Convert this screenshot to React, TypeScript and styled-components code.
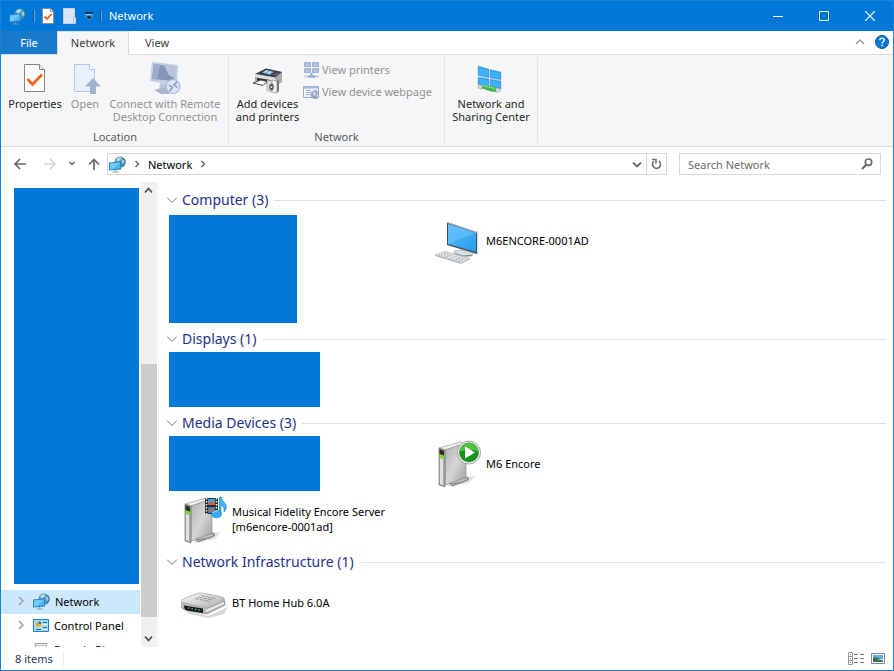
import React from "react";
import styled, { createGlobalStyle } from "styled-components";

const GlobalStyle = createGlobalStyle`
  *, *::before, *::after { box-sizing: border-box; }
  body { margin: 0; background: #fff; }
  button, input { font: inherit; color: inherit; }
  button { border: 0; padding: 0; background: none; }
  ul { list-style: none; margin: 0; padding: 0; }
  svg { display: block; flex: none; }
`;

const BLUE = "#0078d7";

/* ---------- Shell ---------- */

const Window = styled.div`
  display: flex;
  flex-direction: column;
  height: 100vh;
  border: 1px solid #1883d7;
  background: #fff;
  color: #000;
  font-family: "Noto Sans", "Open Sans", sans-serif;
  font-size: 11px;
  line-height: 15px;
  overflow: hidden;
`;

const TitleBar = styled.header`
  display: flex;
  align-items: center;
  flex: none;
  height: 30px;
  padding-left: 8px;
  background: ${BLUE};
  color: #fff;
`;

const QuickAccess = styled.div`
  display: flex;
  align-items: center;
  gap: 9px;
`;

const TitleDivider = styled.span`
  width: 2px;
  height: 12px;
  margin: 0 -2px;
  border-left: 1px solid #0a5391;
  border-right: 1px solid #5ba6e2;
`;

const Title = styled.h1`
  flex: 1;
  margin: 0 0 0 9px;
  padding-bottom: 1px;
  font-size: 11px;
  font-weight: 400;
`;

const IconButton = styled.button`
  display: flex;
  align-items: center;
  justify-content: center;
`;

const ForwardButton = styled(IconButton)`
  padding-left: 4px;
`;

const CaptionButton = styled(IconButton)`
  width: 46px;
  height: 30px;
`;

const TabBar = styled.nav`
  display: flex;
  flex: none;
  height: 24px;
  border-bottom: 1px solid #dadbdc;
`;

const Tab = styled.button<{ $kind?: "file" | "active" }>`
  height: ${(p) => (p.$kind === "active" ? 24 : 23)}px;
  width: ${(p) => (p.$kind === "active" ? 72 : 56)}px;
  padding-bottom: ${(p) => (p.$kind === "active" ? 2 : 0)}px;
  color: ${(p) => (p.$kind === "file" ? "#fff" : "#3c3c3c")};
  background: ${(p) =>
    p.$kind === "file" ? "#1979ca" : p.$kind === "active" ? "#f5f6f7" : "transparent"};
  border: ${(p) => (p.$kind === "active" ? "1px solid #dadbdc" : "0")};
  border-bottom: 0;
`;

const TabTools = styled.div`
  display: flex;
  align-items: center;
  gap: 10px;
  margin-left: auto;
  padding: 0 4px 1px 0;
`;

/* ---------- Ribbon ---------- */

const Ribbon = styled.section`
  display: flex;
  flex: none;
  height: 92px;
  padding: 2px 0 3px 1px;
  background: #f5f6f7;
  border-bottom: 1px solid #dadbdc;
`;

const RibbonGroup = styled.div`
  display: flex;
  flex-direction: column;
  justify-content: space-between;
  padding: 4px 4px 0;
  border-right: 1px solid #e2e3e4;
`;

const RibbonRow = styled.div`
  display: flex;
  align-items: flex-start;
`;

const GroupLabel = styled.div`
  height: 14px;
  text-align: center;
  color: #5a5a5a;
`;

const BigButton = styled.button<{ $width: number }>`
  display: flex;
  flex-direction: column;
  align-items: center;
  gap: 2px;
  width: ${(p) => p.$width}px;
  line-height: 13px;
  white-space: pre;
  color: #262626;
  &:disabled { color: #929292; }
`;

const SmallStack = styled.div`
  display: flex;
  flex-direction: column;
  width: 138px;
  padding-left: 1px;
`;

const SmallButton = styled.button`
  display: flex;
  align-items: center;
  gap: 2px;
  height: 22px;
  padding-bottom: 5px;
  white-space: nowrap;
  &:disabled { color: #929292; }
`;

/* ---------- Address row ---------- */

const AddressRow = styled.div`
  display: flex;
  flex: none;
  padding: 6px 12px 7px 11px;
`;

const NavButtons = styled.div`
  display: flex;
  align-items: center;
  gap: 12px;
  margin-right: 7px;
`;

const AddressBox = styled.div`
  display: flex;
  align-items: center;
  flex: 1;
  height: 22px;
  margin-right: 12px;
  border: 1px solid #d9d9d9;
`;

const Crumb = styled.button`
  display: flex;
  align-items: center;
  gap: 8px;
  flex: none;
  padding-left: 1px;
  margin-right: auto;
`;

const Refresh = styled(IconButton)`
  width: 20px;
  height: 20px;
  margin-left: 4px;
  border-left: 1px solid #d9d9d9;
`;

const SearchBox = styled.label`
  display: flex;
  align-items: center;
  width: 202px;
  height: 22px;
  padding: 0 7px 0 8px;
  border: 1px solid #d9d9d9;
`;

const SearchInput = styled.input`
  flex: 1;
  min-width: 0;
  padding: 0;
  border: 0;
  outline: 0;
  background: none;
  &::placeholder { color: #6d6d6d; opacity: 1; }
`;

/* ---------- Body ---------- */

const Body = styled.div`
  display: flex;
  flex: 1;
  min-height: 0;
`;

const Sidebar = styled.aside`
  display: flex;
  flex-direction: column;
  width: 139px;
  padding-top: 6px;
  overflow: hidden;
`;

const SidebarPanel = styled.div`
  flex: none;
  height: 396px;
  margin: 0 1px 6px 13px;
  background: ${BLUE};
`;

const TreeItem = styled.button<{ $selected?: boolean }>`
  display: flex;
  align-items: center;
  flex: none;
  gap: 5px;
  width: 100%;
  height: 24px;
  padding: 0 0 2px 16px;
  white-space: nowrap;
  background: ${(p) => (p.$selected ? "#cce8ff" : "transparent")};
  & > svg:first-child { margin-right: 3px; }
`;

const Scrollbar = styled.div`
  display: flex;
  flex-direction: column;
  flex: none;
  width: 16px;
  margin-left: 1px;
  background: #f0f0f0;
`;

const ScrollButton = styled(IconButton)`
  width: 15px;
  height: 17px;
`;

const ScrollSpace = styled.div<{ $grow: number }>`
  flex: ${(p) => p.$grow} 1 0;
`;

const ScrollThumb = styled.div`
  flex: 253 1 0;
  background: #cdcdcd;
`;

const Content = styled.main`
  flex: 1;
  display: flex;
  flex-direction: column;
  gap: 3px;
  min-width: 0;
  margin-left: 1px;
  padding: 5px 7px 0 8px;
  border-left: 1px solid #f2f2f2;
`;

const GroupHeader = styled.button`
  display: flex;
  align-items: center;
  width: 100%;
  height: 26px;
  font-size: 14px;
  line-height: 20px;
  color: #1e3287;
  white-space: nowrap;
  & > svg { margin-right: 5px; }
  &::after {
    content: "";
    flex: 1;
    height: 1px;
    margin-left: 6px;
    background: #e2e2e2;
  }
`;

const ItemGrid = styled.ul`
  display: grid;
  grid-template-columns: repeat(2, 254px);
  grid-auto-rows: 55px;
  padding-left: 2px;
`;

const HiddenBlock = styled.li<{ $rows?: number }>`
  grid-row: span ${(p) => p.$rows ?? 1};
  width: ${(p) => (p.$rows ? 128 : 151)}px;
  margin-top: ${(p) => (p.$rows ? 2 : 0)}px;
  background: ${BLUE};
`;

const Device = styled.li<{ $column?: number }>`
  display: flex;
  align-items: center;
  gap: 3px;
  padding-left: 12px;
  grid-column: ${(p) => p.$column ?? 1};
`;

const StatusBar = styled.footer`
  display: flex;
  align-items: center;
  flex: none;
  height: 23px;
  padding: 0 8px 0 14px;
  color: #1e395b;
`;

const StatusCount = styled.span`
  padding-right: 10px;
  border-right: 1px solid #ececec;
`;

const ViewButtons = styled.div`
  display: flex;
  align-items: center;
  gap: 6px;
  margin-left: auto;
`;

/* ---------- Icons ---------- */

const NetworkIcon = () => (
  <svg width="17" height="17" viewBox="0 0 17 17" aria-hidden="true">
    <circle cx="11" cy="6" r="5.500" fill="#5096b6" />
    <path d="M7.500 2.500L11 1l1.500 1.500L10 5H7.500z" fill="#b9dbe6" />
    <path d="M13 3.500l2.500.5.5 3-2 1-1.500-2z" fill="#9acbdd" />
    <path d="M14.500 2.200A5.500 5.500 0 0 1 13 11.100" fill="none" stroke="#2f6d90" />
    <path d="M0 6.500L12 5.500v8L0 14.500z" fill="#2c82bb" />
    <path d="M1 7.400l10-.8v6l-10 .8z" fill="#45b6fb" />
    <path d="M1 7.400l10-.8L4 13.100l-3 .3z" fill="#6fcbff" />
    <path d="M6.500 14v1.500M3.500 16h6" stroke="#7f9cae" />
  </svg>
);

const CheckDocSmall = () => (
  <svg width="12" height="16" viewBox="0 0 12 16" aria-hidden="true">
    <path d="M.5.5h8l3 3v12H.5z" fill="#fff" stroke="#8b8b8b" />
    <path d="M8.5.5v3h3" fill="#eee" stroke="#8b8b8b" />
    <path d="M2.5 8.5l2.500 2.500 4.500-5" fill="none" stroke="#f25a1e" strokeWidth="1.800" />
  </svg>
);

const FolderSmall = () => (
  <svg width="13" height="16" viewBox="0 0 13 16" aria-hidden="true">
    <path d="M.5.5h11v9h1v6H.5z" fill="#dbe5f6" stroke="#c1d1ea" />
    <path d="M10.500 9.500v6" stroke="#b4c5e0" />
  </svg>
);

const CustomizeIcon = () => (
  <svg width="8" height="8" viewBox="0 0 8 8" aria-hidden="true">
    <path d="M0 1h8" stroke="#001022" strokeWidth="1.400" />
    <path d="M0 2.300h8" stroke="#fff" strokeWidth=".6" />
    <path d="M.5 4h7L4 7.500z" fill="#001022" stroke="#fff" strokeWidth=".4" />
  </svg>
);

const PropertiesIcon = () => (
  <svg width="32" height="34" viewBox="0 0 32 34" aria-hidden="true">
    <path d="M5.500 3.500h15l5 5v22h-20z" fill="#fcfcfc" stroke="#858585" />
    <path d="M20.500 3.500v5h5" fill="#eee" stroke="#858585" />
    <path d="M8.500 18l5 5.500 9.500-10" fill="none" stroke="#f5631e" strokeWidth="2.700" />
  </svg>
);

const OpenIcon = () => (
  <svg width="32" height="34" viewBox="0 0 32 34" aria-hidden="true">
    <path d="M5.500 3.500h15l5 5v22h-20z" fill="#e9f0fb" stroke="#b5c6e2" />
    <path d="M20.500 3.500v5h5" fill="#f7faff" stroke="#b5c6e2" />
    <path d="M24 17l8 8.500h-5V33h-6v-7.500h-5z" fill="#a3b3cf" />
  </svg>
);

const RemoteIcon = () => (
  <svg width="32" height="34" viewBox="0 0 32 34" aria-hidden="true">
    <path d="M3 1l26 3-1 18-9 1L1 20z" fill="#c3cee2" />
    <path d="M5 3l21 3-1 14L3 18z" fill="#8496b9" />
    <path d="M5 3l6 1-3 14-5-.5z" fill="#9dadca" />
    <path d="M15 4.500l11 1.500-1 11-5-3z" fill="#b9c7de" />
    <path d="M11 22l7 1v5l-8 1z" fill="#b9c5dc" />
    <path d="M5 29l9-2 6 1v5H12z" fill="#a7b5d0" />
    <circle cx="24" cy="25.500" r="7" fill="#dce4f2" stroke="#a9b9d5" strokeWidth="1.200" />
    <path d="M20 24l3.500 2.500-3 3.500M28 21l-3 3 3.500 2.500" fill="none" stroke="#8296ba" strokeWidth="1.500" />
  </svg>
);

const PrinterIcon = () => (
  <svg width="32" height="34" viewBox="0 0 32 34" aria-hidden="true">
    <path d="M3 13l11-5.500 16 3.500v10l-6 4-21-5z" fill="#a9abad" />
    <path d="M3 13l11-5.500 16 3.500-7 5.500z" fill="#3b3f43" />
    <path d="M10 11.500l4-2.500 8 1.700-4 3z" fill="#7fb9e6" />
    <path d="M12.500 11.500l3-2M16 12.500l3-2" stroke="#e6f3fc" />
    <path d="M24 11.500l4 .8-4 2.700-4-1z" fill="#5b5f63" />
    <path d="M3 13l20 3.500V20L3 16z" fill="#dedede" />
    <path d="M5 17l13 2v3L5 19.500z" fill="#28292b" />
    <path d="M1 22l8-3 6 1.500-4 4z" fill="#fff" stroke="#4a4a4a" />
    <path d="M15 19l5 1v11l-5-1.500z" fill="#dedede" stroke="#909090" strokeWidth=".6" />
    <path d="M20 19l5 1v12l-5-1z" fill="#efefef" stroke="#858585" strokeWidth=".6" />
    <ellipse cx="19.500" cy="26" rx="2.300" ry="3.300" fill="#55585b" />
    <circle cx="19.500" cy="26" r="1" fill="#eee" />
    <path d="M25 20l2-1v11l-2 2z" fill="#777" />
  </svg>
);

const PrintersSmall = () => (
  <svg width="17" height="17" viewBox="0 0 17 17" aria-hidden="true">
    <path d="M1.500 1.500h6v4h-6zM9.500 1.500h6v4h-6zM1.500 7.500h6v4h-6zM9.500 7.500h6v4h-6z" fill="#b0c0dc" stroke="#9fb1d0" />
    <path d="M8.500 12v3" stroke="#90a4c4" strokeWidth="2" />
    <path d="M1 15.500h15" stroke="#c3d0e6" strokeWidth="2" />
    <path d="M5 15.500h7" stroke="#91a4c5" strokeWidth="2" />
  </svg>
);

const WebpageSmall = () => (
  <svg width="17" height="17" viewBox="0 0 17 17" aria-hidden="true">
    <path d="M.5 3.500h15v11H.5z" fill="#edf2fb" stroke="#9aadcc" />
    <path d="M1 4.500h14" stroke="#a9b9d5" strokeWidth="2" />
    <path d="M3 7.500h5M3 9.500h6M3 11.500h5M10 7.500h4" stroke="#a9b9d5" />
    <circle cx="12" cy="12" r="4" fill="#92a5c6" />
    <path d="M10 10l2-1 1 2-2 2zM13 13l2-2v3z" fill="#dce5f4" />
  </svg>
);

const SharingIcon = () => (
  <svg width="32" height="34" viewBox="0 0 32 34" aria-hidden="true">
    <path d="M3 5l11 3v9L3 14.500zM15 8.500l11 2.500v8l-11-2zM3 16l11 2v9L3 23.500zM15 18l11 2v8.500L15 26z" fill="#2196ea" stroke="#8eb7cf" strokeWidth=".6" />
    <path d="M4 6.500l9 2.500v7l-9-2zM16 10l9 2v6l-9-1.700zM4 17.200l9 1.700v6.500l-9-2.300zM16 19.300l9 1.700v6l-9-2z" fill="#3fb0fa" />
    <path d="M3 23.500l4 1v4l-4-1.500z" fill="#d2d6d8" stroke="#969b9f" strokeWidth=".5" />
    <path d="M7 23.500l14 3v4.500l-5-.5-9-3z" fill="#42b84b" />
    <path d="M7 24.500l13 3" stroke="#9ae193" />
    <path d="M21 27l4 .5v3l-4 1z" fill="#d9ddda" stroke="#969b9f" strokeWidth=".5" />
  </svg>
);

type StrokeProps = { w: number; h: number; d: string; color?: string; thick?: number };

const Stroke = ({ w, h, d, color = "#6b6b6b", thick = 1 }: StrokeProps) => (
  <svg width={w} height={h} viewBox={`0 0 ${w} ${h}`} fill="none" stroke={color} strokeWidth={thick} aria-hidden="true">
    <path d={d} />
  </svg>
);

const TreeChevron = () => <Stroke w={8} h={10} d="M2 1l4 4-4 4" color="#a0a0a0" thick={1.5} />;
const CrumbChevron = () => <Stroke w={6} h={8} d="M1.500 1l3 3-3 3" thick={1.5} />;

const HelpIcon = () => (
  <svg width="14" height="14" viewBox="0 0 14 14" aria-hidden="true">
    <circle cx="7" cy="7" r="6.500" fill="#0078d7" stroke="#15599a" />
    <path d="M4.800 5.300c0-3 4.500-2.800 4.500-.2C9.300 6.800 7 6.700 7 8.700" fill="none" stroke="#fff" strokeWidth="1.400" />
    <path d="M6.300 9.800h1.500v1.500H6.300z" fill="#fff" />
  </svg>
);

const SearchIcon = () => (
  <svg width="12" height="12" viewBox="0 0 12 12" fill="none" stroke="#6b6b6b" aria-hidden="true">
    <circle cx="7.500" cy="4.200" r="3.200" strokeWidth="1.700" />
    <path d="M5.200 6.700L1 11" strokeWidth="2" />
  </svg>
);

const RefreshIcon = () => (
  <svg width="11" height="12" viewBox="0 0 11 12" fill="none" stroke="#6b6b6b" strokeWidth="1.600" aria-hidden="true">
    <path d="M7.800 3.100a4 4 0 1 1-5 .3" />
    <path d="M1 1.500h4v4" />
  </svg>
);

const ControlPanelIcon = () => (
  <svg width="16" height="13" viewBox="0 0 16 13" aria-hidden="true">
    <path d="M.5.500h15v12H.5z" fill="#a5dcfa" stroke="#1d84c6" />
    <circle cx="5.500" cy="5" r="2.800" fill="#fff" />
    <path d="M5.500 5V2.200A2.800 2.800 0 1 0 8.300 5z" fill="#f7a81c" />
    <path d="M5.500 5V2.200A2.800 2.800 0 0 1 8.300 5z" fill="#156fb4" />
    <path d="M10 3.500h4M10 8.500h4M3 10.500h5" stroke="#156fb4" />
    <path d="M10 5.500h4M11 10.500h3" stroke="#fff" />
  </svg>
);

const BinIcon = () => (
  <svg width="16" height="16" viewBox="0 0 16 16" aria-hidden="true">
    <path d="M2 2.500h12l-2 13H4z" fill="#f3f3f3" stroke="#9b9b9b" />
    <path d="M2 4.500h12" stroke="#c8c8c8" />
  </svg>
);

const ComputerIcon = () => (
  <svg width="48" height="48" viewBox="0 0 48 48" aria-hidden="true">
    <defs>
      <linearGradient id="screen" x1="0" y1="0" x2="1" y2="1">
        <stop offset="0" stopColor="#55b9f8" />
        <stop offset="1" stopColor="#269df0" />
      </linearGradient>
    </defs>
    <g transform="translate(0 3)">
      <path d="M12 2l30 10 1 1v20l-1 1L12 25z" fill="#3f4e5a" />
      <path d="M12 2l31 10-1 1L12 3z" fill="#b9c3c9" />
      <path d="M13 4l28 9v19L13 24z" fill="url(#screen)" />
      <path d="M13 24L41 13v-.3L13 4z" fill="#72c8fb" opacity=".5" />
      <path d="M42 12l1.500 1v20L42 34z" fill="#dde2e5" />
      <path d="M26 29l6 1.500v3l-5-1z" fill="#8f999f" />
      <path d="M19 31l8-1 11 3-1 3-9 .5-9-3z" fill="#dbe0e3" stroke="#a0a9ae" strokeWidth=".7" />
      <path d="M20 33.500l8 2.500 9-.7" fill="none" stroke="#798389" />
      <path d="M0 35l10-3.500 25 7-9 4.500z" fill="#e9ebed" stroke="#b4babe" strokeWidth=".8" />
      <path d="M3 36.500l10-3.500M8 38l9-4M13 39.500l9-4M18 41l9-4M22 42l9-4M6 34l23 7M9 33l24 7M3 35l23 7" stroke="#a9b0b5" strokeWidth=".8" strokeDasharray="2 1" />
      <path d="M0 35.500l26 8 9-5" fill="none" stroke="#a4abb0" strokeWidth=".7" />
    </g>
  </svg>
);

const ServerBox = () => (
  <>
    <defs>
      <linearGradient id="metal" x1="0" y1="0" x2="1" y2="1">
        <stop offset="0" stopColor="#adadad" />
        <stop offset=".5" stopColor="#d6d6d6" />
        <stop offset="1" stopColor="#9e9e9e" />
      </linearGradient>
    </defs>
    <path d="M10 44l22-7 8-1-6 7-20 4z" fill="#c8c8c8" opacity=".5" />
    <path d="M15 42l18-5v3l-16 6z" fill="#bdbdbd" stroke="#6d6d6d" strokeWidth=".8" />
    <path d="M14 44l14-2 6-3" fill="none" stroke="#888" />
    <path d="M4 8L25 2l5 1-20 7z" fill="#f1f1f1" stroke="#a0a0a0" strokeWidth=".7" />
    <path d="M10 10L31 3v34l-21 8z" fill="url(#metal)" stroke="#969696" strokeWidth=".7" />
    <path d="M4 8l6 2v37l-6-2z" fill="#a9a9a9" stroke="#777" strokeWidth=".7" />
    <path d="M5 18l3 1v26l-3-1z" fill="#e0e0e0" />
    <path d="M4.500 9l4.500 2v6l-4.500-2z" fill="#252e21" />
    <path d="M4.500 14l4.500 1.500v3L4.500 17z" fill="#78df19" />
  </>
);

const PlayServerIcon = () => (
  <svg width="48" height="52" viewBox="0 0 48 52" aria-hidden="true">
    <g transform="translate(0 2)">
      <ServerBox />
      <circle cx="34" cy="12.500" r="11.500" fill="#fff" stroke="#858585" strokeWidth=".8" />
      <circle cx="34" cy="12.500" r="9.700" fill="#16901b" stroke="#51865a" strokeWidth=".6" />
      <path d="M24.500 12a9.500 9.500 0 0 1 19 0c-6-3-12-3-19 0z" fill="#52bd45" />
      <path d="M30 6.500v12l10-6z" fill="#fff" />
    </g>
  </svg>
);

const MediaServerIcon = () => (
  <svg width="48" height="52" viewBox="0 0 48 52" aria-hidden="true">
    <g transform="translate(0 3)">
      <ServerBox />
      <path d="M24 2h13v16H24z" fill="#252a2f" />
      <path d="M27 3h7v6h-7z" fill="#36a7e5" />
      <path d="M27 11h7v6h-7z" fill="#2589cb" />
      <path d="M27 8l3-3 4 2v2h-7zM27 15l3-3 4 2-2 2z" fill="#df6334" />
      <path d="M25.500 2v16M35.500 2v16" stroke="#fff" strokeWidth="1.500" strokeDasharray="1.500 1.500" />
      <path d="M38.500 1h2c0 5 6 6 4.500 12l-2 3c.5-5-1-6-3-7v8h-1.500z" fill="#42b5f4" stroke="#1a85c9" strokeWidth=".7" />
      <ellipse cx="35.500" cy="18" rx="5" ry="3.800" fill="#36aef0" stroke="#187fbe" strokeWidth=".7" />
      <path d="M32 17c1-2 3-2 5-2" fill="none" stroke="#a6dcfa" />
    </g>
  </svg>
);

const RouterIcon = () => (
  <svg width="48" height="48" viewBox="0 0 48 48" aria-hidden="true">
    <defs>
      <linearGradient id="router" x1="0" y1="0" x2="1" y2="1">
        <stop offset="0" stopColor="#fff" />
        <stop offset="1" stopColor="#aaa" />
      </linearGradient>
    </defs>
    <path d="M5 31l22 6 20-9-4 7-15 4-20-4z" fill="#9e9e9e" opacity=".4" />
    <path d="M-1 24l22-8 22 4 1 6-18 9-22-4c-4-2-5-4-5-7z" fill="#b9b9b9" stroke="#878787" strokeWidth=".8" />
    <path d="M-1 23c-1-2 17-9 20-9 3 0 21 3 24 5 2 1-15 11-18 10z" fill="url(#router)" stroke="#a0a0a0" strokeWidth=".7" />
    <path d="M3 26.500l19 3v4.500L6 31.500c-2-1-3-2-3-5z" fill="#161b19" />
    <path d="M7 29l14 2.500" stroke="#43c45a" strokeWidth="1.500" strokeDasharray="1.500 2" />
    <path d="M14 19.500l15 3M17 18l15 3M20 16.500l15 3" stroke="#888" strokeWidth=".8" strokeDasharray="4 1" />
    <path d="M25 32l18-8" stroke="#f3f3f3" strokeWidth="1.500" />
  </svg>
);

const DetailsIcon = () => (
  <svg width="17" height="13" viewBox="0 0 17 13" aria-hidden="true">
    <path d="M.5.500h4v12h-4zM.5 4.500h4M.5 8.500h4" fill="#fff" stroke="#999" />
    <path d="M6 2.500h4M12 2.500h4M6 6.500h4M12 6.500h4M6 10.500h4M12 10.500h4" stroke="#777" />
    <path d="M2 2h1v1H2z" fill="#3e6fb0" />
    <path d="M2 6h1v1H2z" fill="#3e8fd0" />
    <path d="M2 10h1v1H2z" fill="#c33" />
  </svg>
);

const TilesIcon = () => (
  <svg width="14" height="11" viewBox="0 0 14 11" aria-hidden="true">
    <path d="M.5.500h13v10H.5z" fill="#fff" stroke="#888" />
    <path d="M2 2h10v7H2z" fill="#66aaf2" />
    <path d="M2 5l3-1 7 3v2H2z" fill="#347158" />
    <path d="M5 6.500l7-.5v1.500z" fill="#c3def4" />
  </svg>
);

/* ---------- Page ---------- */

const Group = ({ title, children }: { title: string; children: React.ReactNode }) => (
  <section>
    <GroupHeader aria-expanded="true">
      <Stroke w={10} h={8} d="M0 1.500l5 5 5-5" color="#777" />
      {title}
    </GroupHeader>
    <ItemGrid>{children}</ItemGrid>
  </section>
);

export default function App() {
  return (
    <Window>
      <GlobalStyle />
      <TitleBar>
        <QuickAccess>
          <NetworkIcon />
          <TitleDivider />
          <IconButton aria-label="Properties"><CheckDocSmall /></IconButton>
          <IconButton aria-label="Open"><FolderSmall /></IconButton>
          <IconButton aria-label="Customize toolbar"><CustomizeIcon /></IconButton>
          <TitleDivider />
        </QuickAccess>
        <Title>Network</Title>
        <CaptionButton aria-label="Minimize"><Stroke w={10} h={11} d="M0 5.500h10" color="#fff" /></CaptionButton>
        <CaptionButton aria-label="Maximize"><Stroke w={10} h={10} d="M.5.500h9v9h-9z" color="#fff" /></CaptionButton>
        <CaptionButton aria-label="Close"><Stroke w={10} h={10} d="M0 0l10 10M10 0L0 10" color="#fff" thick={1.2} /></CaptionButton>
      </TitleBar>

      <TabBar>
        <Tab $kind="file">File</Tab>
        <Tab $kind="active">Network</Tab>
        <Tab>View</Tab>
        <TabTools>
          <IconButton aria-label="Collapse ribbon"><Stroke w={10} h={6} d="M1 5l4-4 4 4" color="#999" thick={1.3} /></IconButton>
          <IconButton aria-label="Help"><HelpIcon /></IconButton>
        </TabTools>
      </TabBar>

      <Ribbon>
        <RibbonGroup>
          <RibbonRow>
            <BigButton $width={58}><PropertiesIcon />Properties</BigButton>
            <BigButton $width={42} disabled><OpenIcon />Open</BigButton>
            <BigButton $width={118} disabled><RemoteIcon />{"Connect with Remote\nDesktop Connection"}</BigButton>
          </RibbonRow>
          <GroupLabel>Location</GroupLabel>
        </RibbonGroup>
        <RibbonGroup>
          <RibbonRow>
            <BigButton $width={69}><PrinterIcon />{"Add devices\nand printers"}</BigButton>
            <SmallStack>
              <SmallButton disabled><PrintersSmall />View printers</SmallButton>
              <SmallButton disabled><WebpageSmall />View device webpage</SmallButton>
            </SmallStack>
          </RibbonRow>
          <GroupLabel>Network</GroupLabel>
        </RibbonGroup>
        <RibbonGroup>
          <RibbonRow>
            <BigButton $width={84}><SharingIcon />{"Network and\nSharing Center"}</BigButton>
          </RibbonRow>
        </RibbonGroup>
      </Ribbon>

      <AddressRow>
        <NavButtons>
          <IconButton aria-label="Back"><Stroke w={14} h={12} d="M14 6H3M8 1L3 6l5 5" thick={1.7} /></IconButton>
          <ForwardButton aria-label="Forward"><Stroke w={14} h={12} d="M2 6h11M8 1l5 5-5 5" color="#d5d5d5" thick={1.7} /></ForwardButton>
          <IconButton aria-label="Recent locations"><Stroke w={8} h={6} d="M1.500 1L4 3.500 6.500 1" thick={1.5} /></IconButton>
          <IconButton aria-label="Up"><Stroke w={12} h={12} d="M6 12V2M1 6.500l5-5 5 5" thick={1.7} /></IconButton>
        </NavButtons>
        <AddressBox>
          <Crumb>
            <NetworkIcon />
            <CrumbChevron />
            Network
            <CrumbChevron />
          </Crumb>
          <IconButton aria-label="Previous locations"><Stroke w={10} h={7} d="M1 1.500l4 4 4-4" thick={1.8} /></IconButton>
          <Refresh aria-label="Refresh"><RefreshIcon /></Refresh>
        </AddressBox>
        <SearchBox>
          <SearchInput placeholder="Search Network" aria-label="Search Network" />
          <SearchIcon />
        </SearchBox>
      </AddressRow>

      <Body>
        <Sidebar>
          <SidebarPanel />
          <TreeItem $selected><TreeChevron /><NetworkIcon />Network</TreeItem>
          <TreeItem><TreeChevron /><ControlPanelIcon />Control Panel</TreeItem>
          <TreeItem><Stroke w={8} h={10} d="" /><BinIcon />Recycle Bin</TreeItem>
        </Sidebar>
        <Scrollbar>
          <ScrollButton aria-label="Scroll up"><Stroke w={9} h={7} d="M1 5.500l3.500-4 3.500 4" color="#505050" thick={1.8} /></ScrollButton>
          <ScrollSpace $grow={165} />
          <ScrollThumb />
          <ScrollSpace $grow={13} />
          <ScrollButton aria-label="Scroll down"><Stroke w={9} h={7} d="M1 1.500l3.500 4 3.500-4" color="#505050" thick={1.8} /></ScrollButton>
        </Scrollbar>
        <Content>
          <Group title="Computer (3)">
            <HiddenBlock $rows={2} />
            <Device $column={2}><ComputerIcon />M6ENCORE-0001AD</Device>
          </Group>
          <Group title="Displays (1)">
            <HiddenBlock />
          </Group>
          <Group title="Media Devices (3)">
            <HiddenBlock />
            <Device $column={2}><PlayServerIcon />M6 Encore</Device>
            <Device>
              <MediaServerIcon />
              <span>Musical Fidelity Encore Server<br />[m6encore-0001ad]</span>
            </Device>
          </Group>
          <Group title="Network Infrastructure (1)">
            <Device><RouterIcon />BT Home Hub 6.0A</Device>
          </Group>
        </Content>
      </Body>

      <StatusBar>
        <StatusCount>8 items</StatusCount>
        <ViewButtons>
          <IconButton aria-label="Details view"><DetailsIcon /></IconButton>
          <IconButton aria-label="Large icons view"><TilesIcon /></IconButton>
        </ViewButtons>
      </StatusBar>
    </Window>
  );
}
